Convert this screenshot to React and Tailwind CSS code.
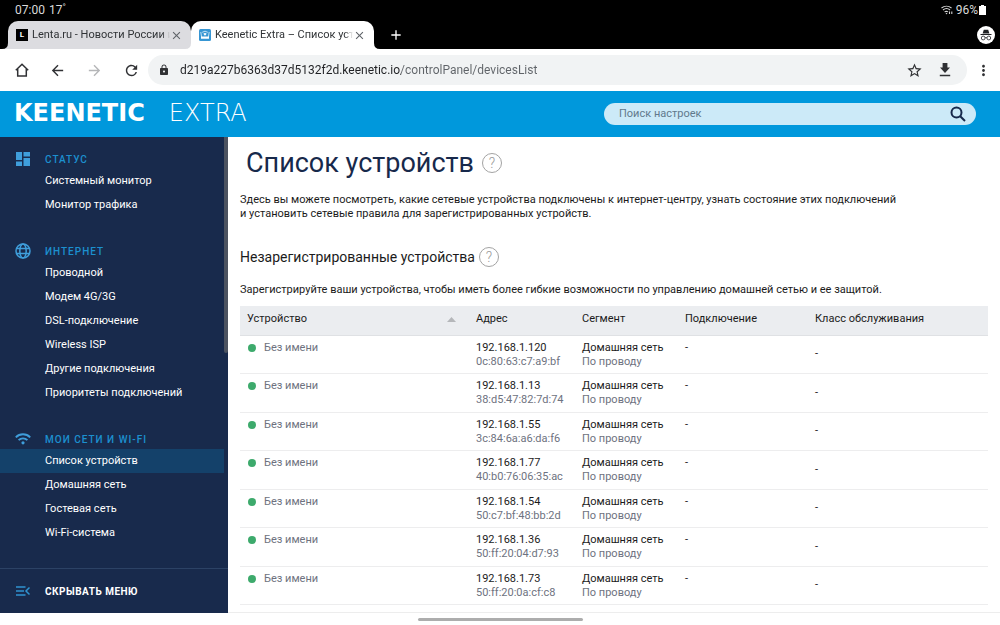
import React, { useState } from 'react';
import { MdArrowBack, MdArrowForward, MdRefresh, MdLock, MdMoreVert, MdStarBorder, MdClose, MdAdd } from 'react-icons/md';

const menu = [
  {
    title: 'Статус',
    icon: DashboardIcon,
    items: ['Системный монитор', 'Монитор трафика'],
  },
  {
    title: 'Интернет',
    icon: GlobeIcon,
    items: ['Проводной', 'Модем 4G/3G', 'DSL-подключение', 'Wireless ISP', 'Другие подключения', 'Приоритеты подключений'],
  },
  {
    title: 'Мои сети и Wi-Fi',
    icon: WifiIcon,
    items: ['Список устройств', 'Домашняя сеть', 'Гостевая сеть', 'Wi-Fi-система'],
  },
];

const devices = [
  { ip: '192.168.1.120', mac: '0c:80:63:c7:a9:bf' },
  { ip: '192.168.1.13', mac: '38:d5:47:82:7d:74' },
  { ip: '192.168.1.55', mac: '3c:84:6a:a6:da:f6' },
  { ip: '192.168.1.77', mac: '40:b0:76:06:35:ac' },
  { ip: '192.168.1.54', mac: '50:c7:bf:48:bb:2d' },
  { ip: '192.168.1.36', mac: '50:ff:20:04:d7:93' },
  { ip: '192.168.1.73', mac: '50:ff:20:0a:cf:c8' },
];

function DashboardIcon() {
  return (
    <svg width="14" height="14" viewBox="0 0 14 14" fill="currentColor">
      <path d="M0 0h6v8H0zM0 9.5h6V14H0zM7.5 0H14v4.5H7.5zM7.5 6H14v8H7.5z" />
    </svg>
  );
}

function GlobeIcon() {
  return (
    <svg width="16" height="16" viewBox="0 0 16 16" fill="none" stroke="currentColor" strokeWidth="1.5">
      <circle cx="8" cy="8" r="7" />
      <ellipse cx="8" cy="8" rx="3.2" ry="7" />
      <path d="M1.3 5.5h13.4M1.3 10.5h13.4" />
    </svg>
  );
}

function WifiIcon() {
  return (
    <svg width="16" height="12" viewBox="0 0 16 12" fill="none" stroke="currentColor" strokeWidth="1.9">
      <path d="M.8 4.3a10.2 10.2 0 0 1 14.4 0M3.6 7.2a6.2 6.2 0 0 1 8.8 0" />
      <circle cx="8" cy="9.8" r="1.6" fill="currentColor" stroke="none" />
    </svg>
  );
}

function CollapseIcon() {
  return (
    <svg width="14" height="10" viewBox="0 0 14 10" fill="none" stroke="currentColor" strokeWidth="1.5">
      <path d="M0 1h9.5M0 5h8M0 9h9.5M13.5 1.5L10 5l3.5 3.5" />
    </svg>
  );
}

function HomeIcon() {
  return (
    <svg width="14" height="14" viewBox="0 0 14 14" fill="none" stroke="currentColor" strokeWidth="1.5">
      <path d="M.8 7.3L7 1.2l6.2 6.1M2.7 6v7h8.6V6" />
    </svg>
  );
}

function DownloadIcon() {
  return (
    <svg width="12" height="14" viewBox="0 0 12 14" fill="currentColor">
      <path d="M3.6 0h4.8v4.6H11L6 10 1 4.6h2.6zM.8 11.7h10.4v1.6H.8z" />
    </svg>
  );
}

function IncognitoIcon() {
  return (
    <svg width="18" height="18" viewBox="0 0 18 18">
      <circle cx="9" cy="9" r="9" fill="#fff" />
      <path d="M6.8 3.8h4.4l1.2 3.7H5.6zM3.5 8h11v1h-11z" fill="#202124" />
      <g fill="none" stroke="#202124" strokeWidth=".8">
        <circle cx="6.2" cy="12" r="1.9" />
        <circle cx="11.8" cy="12" r="1.9" />
        <path d="M8.1 11.8q.9-.6 1.8 0" />
      </g>
    </svg>
  );
}

function StatusWifiIcon() {
  return (
    <svg width="12" height="10" viewBox="0 0 12 10" fill="none" stroke="#d4d4d4" strokeWidth="1.1">
      <path d="M.5 3a8 8 0 0 1 10 0M2 5a5.5 5.5 0 0 1 7 0M3.6 6.9a3 3 0 0 1 3.4 0" />
      <path d="M5.5 9.5L4.5 8h2z" fill="#d4d4d4" stroke="none" />
      <path d="M8.5 9V6.5M10.8 6.5V9" />
    </svg>
  );
}

function RouterFavicon() {
  return (
    <svg width="12" height="12" viewBox="0 0 12 12" className="shrink-0">
      <rect width="12" height="12" rx="1.5" fill="#3796d3" />
      <path d="M2.6 8L1.8 3M9.4 8l.8-5" stroke="#fff" strokeWidth=".7" />
      <path d="M2 7.5h8v2.3H2zM4.3 4.8q1.7-1.5 3.4 0L6 6.7z" fill="#fff" />
      <path d="M3.2 3.3q2.8-2.2 5.6 0" stroke="#fff" strokeWidth=".7" fill="none" />
    </svg>
  );
}

function Tab({ title, icon, active }) {
  return (
    <div className={`relative flex items-center h-7 w-[183px] rounded-t-[10px] px-2 ${active ? 'bg-white text-white z-10' : 'bg-[#dcdce0] text-[#dcdce0]'}`}>
      <svg className="absolute bottom-0 -left-1.5" width="6" height="6" viewBox="0 0 6 6" fill="currentColor">
        <path d="M6 0v6H0q6 0 6-6z" />
      </svg>
      <svg className="absolute bottom-0 -right-1.5" width="6" height="6" viewBox="0 0 6 6" fill="currentColor">
        <path d="M0 0v6h6q-6 0-6-6z" />
      </svg>
      {icon}
      <span className="flex-1 min-w-0 ml-1 overflow-hidden whitespace-nowrap text-[11px] text-[#303336] mask-r-from-94%">
        {title}
      </span>
      <button aria-label="Закрыть вкладку" className="text-[#5f6368]">
        <MdClose size={13} />
      </button>
    </div>
  );
}

function HelpButton() {
  return (
    <button aria-label="Справка" className="w-5 h-5 shrink-0 rounded-full border border-[#a3a3a3] text-[#999] text-sm leading-none font-light flex items-center justify-center">
      ?
    </button>
  );
}

export default function App() {
  const [query, setQuery] = useState('');
  const [url, setUrl] = useState('d219a227b6363d37d5132f2d.keenetic.io/controlPanel/devicesList');
  const [current, setCurrent] = useState('Список устройств');

  return (
    <div className="h-screen flex flex-col bg-white font-[Roboto,sans-serif] text-[11px] text-[#1b1b1b] overflow-hidden">
      {/* Status bar */}
      <div className="h-5 shrink-0 bg-black text-[#dadada] text-xs flex items-center justify-between pl-[15px] pr-3.5">
        <div className="flex items-center gap-1">
          <span>07:00</span>
          <span>17<sup className="text-[9px]">°</sup></span>
        </div>
        <div className="flex items-center gap-[3px]">
          <StatusWifiIcon />
          <span>96%</span>
          <svg width="7" height="10" viewBox="0 0 7 10" fill="#fff" className="-ml-0.5">
            <path d="M2 0h3v1h2v9H0V1h2z" />
          </svg>
        </div>
      </div>

      {/* Browser tabs */}
      <div className="h-[29px] shrink-0 bg-black flex items-end pl-2 pr-[5px]">
        <Tab
          title="Lenta.ru - Новости России и мира"
          icon={<span className="w-3 h-3 shrink-0 bg-black text-white text-[8px] font-bold leading-none flex items-center justify-center">L</span>}
        />
        <Tab title="Keenetic Extra – Список устройств" icon={<RouterFavicon />} active />
        <button aria-label="Новая вкладка" className="self-center ml-3.5 text-white">
          <MdAdd size={16} />
        </button>
        <div className="self-center ml-auto">
          <IncognitoIcon />
        </div>
      </div>

      {/* Address bar */}
      <div className="h-[42px] shrink-0 flex items-center pl-[15px] pr-2 text-[#303134]">
        <button aria-label="Домой"><HomeIcon /></button>
        <button aria-label="Назад" className="ml-5"><MdArrowBack size={17} /></button>
        <button aria-label="Вперёд" className="ml-5 text-[#b5b6b8]"><MdArrowForward size={17} /></button>
        <button aria-label="Обновить" className="ml-5"><MdRefresh size={17} /></button>
        <div className="flex-1 h-[30px] ml-2 rounded-full bg-[#f1f3f4] flex items-center pl-2.5 pr-4">
          <MdLock size={12} />
          <input
            aria-label="Адресная строка"
            value={url}
            onChange={(e) => setUrl(e.target.value)}
            className="flex-1 min-w-0 ml-2.5 text-xs outline-none text-transparent caret-black bg-clip-text bg-[linear-gradient(to_right,#202124_221px,#5f6368_221px)]"
          />
          <button aria-label="Добавить в закладки"><MdStarBorder size={17} /></button>
          <button aria-label="Скачать" className="ml-4"><DownloadIcon /></button>
        </div>
        <button aria-label="Меню" className="ml-2"><MdMoreVert size={17} /></button>
      </div>

      {/* Header */}
      <header className="h-[46px] shrink-0 bg-[#0098dc] flex items-center justify-between pl-3.5 pr-6">
        <a href="#" className="flex items-center gap-6 text-white text-2xl leading-none pb-0.5 font-['DejaVu_Sans',sans-serif]">
          <span className="font-bold">KEENETIC</span>
          <span className="font-extralight">EXTRA</span>
        </a>
        <div className="w-[372px] h-[22px] rounded-full bg-[#cceaf8] flex items-center pl-[15px] pr-2.5">
          <input
            type="search"
            aria-label="Поиск настроек"
            placeholder="Поиск настроек"
            value={query}
            onChange={(e) => setQuery(e.target.value)}
            className="flex-1 min-w-0 bg-transparent outline-none placeholder:text-[#61798c]"
          />
          <button aria-label="Найти" className="text-[#17294b]">
            <svg width="16" height="16" viewBox="0 0 16 16" fill="none" stroke="currentColor" strokeWidth="2">
              <circle cx="6.5" cy="6.5" r="5" />
              <path d="M10.2 10.2L15 15" />
            </svg>
          </button>
        </div>
      </header>

      <div className="flex-1 min-h-0 flex">
        {/* Sidebar */}
        <aside className="w-[228px] shrink-0 bg-[#182a4c] text-white flex flex-col">
          <div className="flex-1 min-h-0 flex overflow-hidden">
            <nav className="flex-1 pt-3 flex flex-col gap-6">
              {menu.map((group) => (
                <div key={group.title}>
                  <div className="h-5 flex items-center text-[#1c90cf]">
                    <span className="w-[45px] flex justify-center text-[#3f9edb]"><group.icon /></span>
                    <span className="text-[10px] font-medium uppercase tracking-widest">{group.title}</span>
                  </div>
                  {group.items.map((item) => (
                    <a
                      key={item}
                      href="#"
                      onClick={() => setCurrent(item)}
                      className={`h-6 pl-[45px] flex items-center ${item === current ? 'bg-[#14416a]' : ''}`}
                    >
                      {item}
                    </a>
                  ))}
                </div>
              ))}
            </nav>
            <div className="w-1 h-1/2 rounded-b bg-[#4c5360]" />
          </div>
          <button className="h-[45px] shrink-0 border-t border-[#2c4265] flex items-center">
            <span className="w-[45px] flex justify-center text-[#2f93cf]"><CollapseIcon /></span>
            <span className="text-[10px] font-bold uppercase tracking-wider">Скрывать меню</span>
          </button>
        </aside>

        {/* Content */}
        <main className="flex-1 min-w-0 px-3 pb-[7px] border-b border-[#ededed] grid grid-rows-[auto_1fr]">
          <div>
            <div className="flex items-center gap-2 pl-1.5 pt-2">
              <h1 className="text-[27px] leading-9 text-[#17294b]">Список устройств</h1>
              <HelpButton />
            </div>
            <p className="mt-3 leading-[14px]">
              Здесь вы можете посмотреть, какие сетевые устройства подключены к интернет-центру, узнать состояние этих подключений
              <br />
              и установить сетевые правила для зарегистрированных устройств.
            </p>
            <div className="flex items-center gap-1 mt-[26px]">
              <h2 className="text-sm">Незарегистрированные устройства</h2>
              <HelpButton />
            </div>
            <p className="mt-4 leading-[14px]">
              Зарегистрируйте ваши устройства, чтобы иметь более гибкие возможности по управлению домашней сетью и ее защитой.
            </p>
          </div>

          <table className="w-full mt-[9px] table-fixed text-left">
            <thead>
              <tr className="h-[29px] bg-[#ebedf0] border-b border-[#dfe1e4]">
                <th className="w-[229px] px-[7px] pb-0.5 font-normal">
                  <div className="flex items-center justify-between">
                    Устройство
                    <svg width="9" height="5" viewBox="0 0 9 5" fill="#b5b7ba" className="mr-1.5">
                      <path d="M4.5 0L9 5H0z" />
                    </svg>
                  </div>
                </th>
                <th className="w-[106px] px-[7px] pb-0.5 font-normal">Адрес</th>
                <th className="w-[103px] px-[7px] pb-0.5 font-normal">Сегмент</th>
                <th className="w-[130px] px-[7px] pb-0.5 font-normal">Подключение</th>
                <th className="px-[7px] pb-0.5 font-normal">Класс обслуживания</th>
              </tr>
            </thead>
            <tbody className="leading-[14px]">
              {devices.map((device) => (
                <tr key={device.ip} className="border-b border-[#ededee] align-top">
                  <td className="px-2 pt-[5px] text-[#6e7280]">
                    <div className="flex items-center gap-2">
                      <span className="w-2 h-2 rounded-full bg-[#3daa6c]" />
                      Без имени
                    </div>
                  </td>
                  <td className="px-[7px] pt-[5px]">
                    <div>{device.ip}</div>
                    <div className="text-[#6e7280]">{device.mac}</div>
                  </td>
                  <td className="px-[7px] pt-[5px]">
                    <div>Домашняя сеть</div>
                    <div className="text-[#6e7280]">По проводу</div>
                  </td>
                  <td className="px-[7px] pt-[5px]">-</td>
                  <td className="px-[7px] align-middle">-</td>
                </tr>
              ))}
            </tbody>
          </table>
        </main>
      </div>

      {/* Gesture handle */}
      <div className="h-3 shrink-0 flex items-center justify-center">
        <div className="w-[165px] h-[3px] rounded-full bg-[#adadad]" />
      </div>
    </div>
  );
}
